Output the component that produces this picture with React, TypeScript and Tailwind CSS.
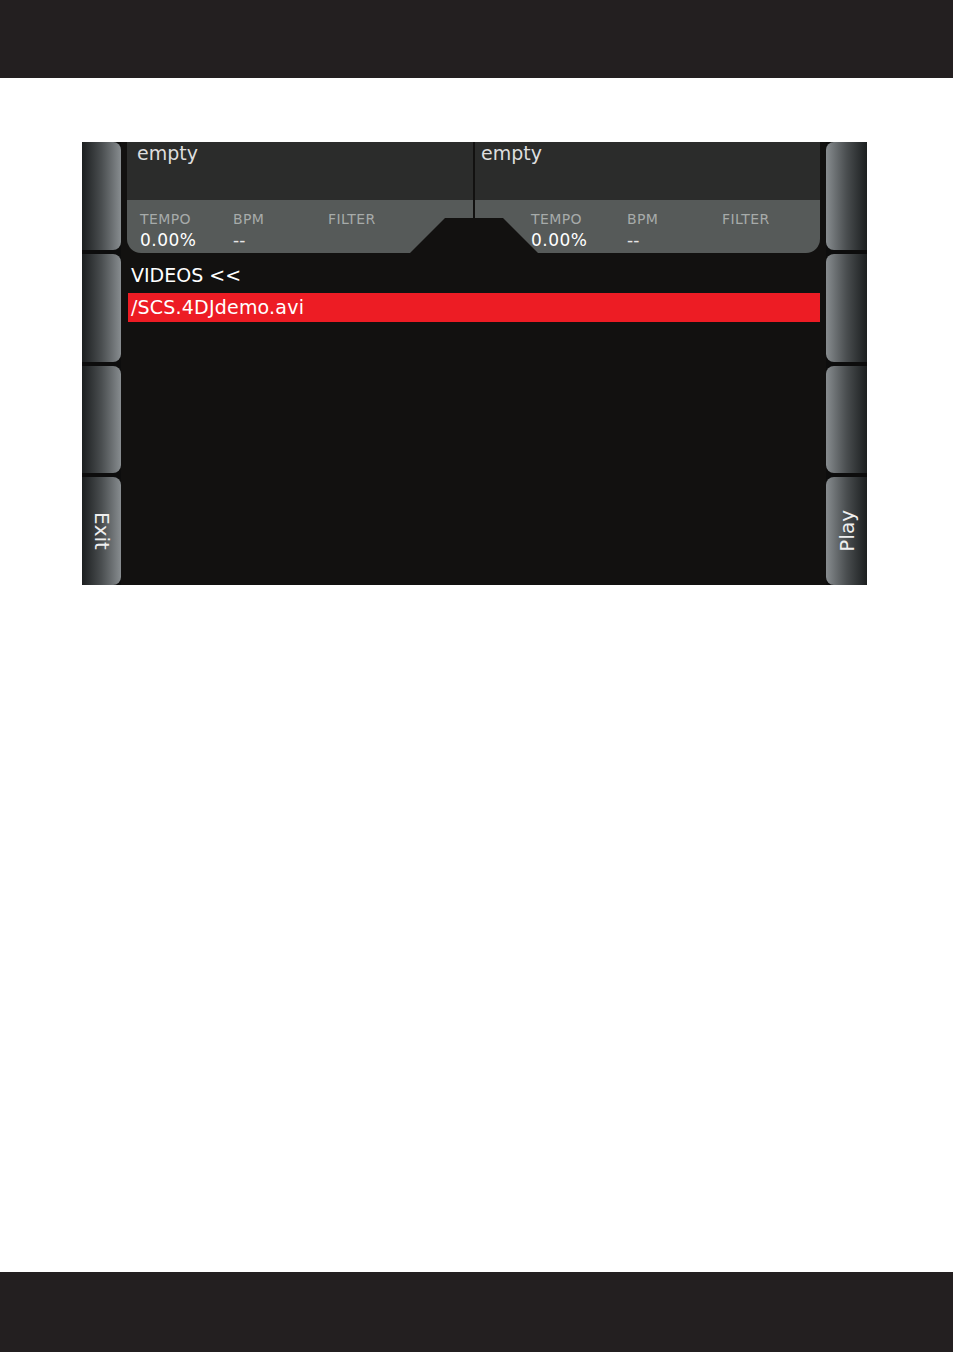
import React from "react";

type DeckProps = {
  side: "left" | "right";
};

function Deck({ side }: DeckProps) {
  const isLeft = side === "left";
  return (
    <div className={`flex flex-col ${isLeft ? "w-[346px]" : "w-[345px]"}`}>
      {/* track name */}
      <div
        className={`h-[58px] bg-[#2b2c2b] text-[19px] leading-[22px] text-[#dedede] ${
          isLeft ? "pl-[10px]" : "pl-[6px]"
        }`}
      >
        empty
      </div>
      {/* tempo / bpm / filter strip */}
      <div
        className={`h-[53px] bg-[#565a59] pt-[11px] ${
          isLeft
            ? "rounded-bl-[14px] pl-[13px] grid grid-cols-[93px_95px_1fr]"
            : "rounded-br-[14px] pl-[56px] grid grid-cols-[96px_95px_1fr]"
        } content-start`}
      >
        <span className="text-[14px] leading-[16px] tracking-[0.4px] text-[#a7abaa]">TEMPO</span>
        <span className="text-[14px] leading-[16px] tracking-[0.4px] text-[#a7abaa]">BPM</span>
        <span className="text-[14px] leading-[16px] tracking-[0.4px] text-[#a7abaa]">FILTER</span>
        <span className="mt-[3px] text-[17px] leading-[20px] text-white tracking-[0.5px]">0.00%</span>
        <span className="mt-[3px] text-[17px] leading-[20px] text-[#e6e6e6]">--</span>
        <span />
      </div>
    </div>
  );
}

function SideButton({ side, label }: { side: "left" | "right"; label?: string }) {
  const isLeft = side === "left";
  return (
    <div
      className={`flex-1 flex items-center justify-center ${
        isLeft
          ? "rounded-r-[8px] bg-linear-to-r from-[#1c1f20] via-[#4a4e50] to-[#888d90]"
          : "rounded-l-[8px] bg-linear-to-r from-[#888d90] via-[#4a4e50] to-[#1c1f20]"
      }`}
    >
      {label && (
        <span
          className={`text-[20px] leading-[22px] text-[#eeeeee] [writing-mode:vertical-rl] ${
            isLeft ? "" : "rotate-180"
          }`}
        >
          {label}
        </span>
      )}
    </div>
  );
}

export default function App() {
  return (
    <div className="flex flex-col h-[1352px] bg-white font-['DejaVu_Sans',sans-serif]">
      <div className="h-[78px] bg-[#231f20]" />

      <div className="flex-1 pt-[64px] pl-[82px]">
        {/* device screen */}
        <div className="flex w-[785px] h-[443px] bg-[#121110] overflow-hidden">
          {/* left soft keys */}
          <div className="w-[39px] flex flex-col gap-[4px] bg-[#0d0d0d]">
            <SideButton side="left" />
            <SideButton side="left" />
            <SideButton side="left" />
            <SideButton side="left" label="Exit" />
          </div>

          {/* main display */}
          <div className="flex-1 flex flex-col pl-[6px] pr-[6px]">
            <div className="relative flex gap-[2px] h-[111px]">
              <Deck side="left" />
              <Deck side="right" />
              <svg
                className="absolute left-[283px] top-[76px]"
                width="128"
                height="35"
                viewBox="0 0 128 35"
              >
                <polygon points="0,35 35,0 93,0 128,35" fill="#121110" />
              </svg>
            </div>

            <div className="mt-[11px] pl-[4px] text-[19px] leading-[22px] text-white">
              VIDEOS &lt;&lt;
            </div>
            <div className="mt-[7px] ml-[1px] h-[29px] bg-[#ed1c24] pl-[3px] text-[19px] leading-[29px] tracking-[0.2px] text-white">
              /SCS.4DJdemo.avi
            </div>
          </div>

          {/* right soft keys */}
          <div className="w-[41px] flex flex-col gap-[4px] bg-[#0d0d0d]">
            <SideButton side="right" />
            <SideButton side="right" />
            <SideButton side="right" />
            <SideButton side="right" label="Play" />
          </div>
        </div>
      </div>

      <div className="h-[80px] bg-[#231f20]" />
    </div>
  );
}
